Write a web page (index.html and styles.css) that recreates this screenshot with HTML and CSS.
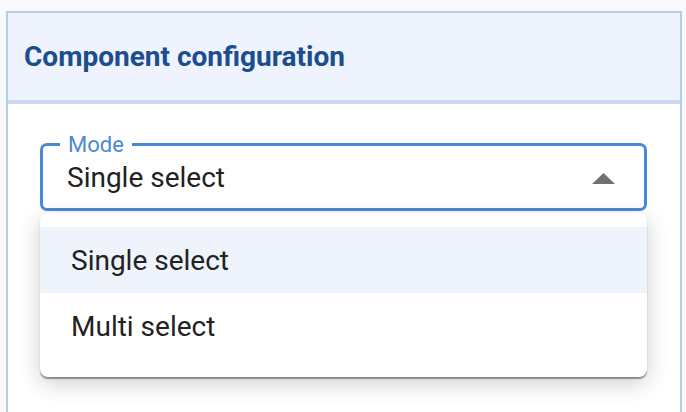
FILE: index.html
```html
<!DOCTYPE html>
<html lang="en">
<head>
<meta charset="utf-8">
<title>Component configuration</title>
<link rel="stylesheet" href="styles.css">
</head>
<body>
  <section class="card">
    <header class="card-header">
      <h2 class="card-title">Component configuration</h2>
    </header>
    <div class="card-body">
      <div class="select-wrap">
        <div class="select">
          <span class="select-label">Mode</span>
          <span class="select-value">Single select</span>
          <svg class="select-arrow" width="23" height="11" viewBox="0 0 23 11" aria-hidden="true">
            <path d="M0 11 L11.5 0 L23 11 Z" fill="#717171"/>
          </svg>
        </div>
        <ul class="menu">
          <li class="menu-item is-selected">Single select</li>
          <li class="menu-item">Multi select</li>
        </ul>
      </div>
    </div>
  </section>
</body>
</html>
```
FILE: styles.css
```css
html, body {
  margin: 0;
  padding: 0;
}
body {
  background: #f7f9fd;
  font-family: Roboto, "Liberation Sans", Arial, sans-serif;
  padding: 11px 4px 0 6px;
  height: 412px;
  box-sizing: border-box;
  overflow: hidden;
  display: flex;
  flex-direction: column;
}
.card {
  flex: 1;
  border: 2px solid #b8cce5;
  border-bottom: none;
  background: #ffffff;
}
.card-header {
  height: 87px;
  background: #eef3fd;
  border-bottom: 4px solid #cad9ee;
  display: flex;
  align-items: center;
  padding-left: 16px;
}
.card-title {
  margin: 0;
  font-size: 28px;
  font-weight: 700;
  color: #1c4d8f;
  line-height: 33px;
}
.card-body {
  padding: 39px 33px 0 32px;
}
.select-wrap {
  position: relative;
}
.select {
  position: relative;
  height: 68px;
  box-sizing: border-box;
  border: 3px solid #4a89d6;
  border-radius: 7px;
  display: flex;
  align-items: center;
  padding: 0 29px 0 24px;
  background: #fff;
}
.select-label {
  position: absolute;
  top: -12px;
  left: 17px;
  padding: 0 8px;
  background: #fff;
  color: #4a89d6;
  font-size: 22px;
  line-height: 22px;
}
.select-value {
  flex: 1;
  font-size: 28px;
  line-height: 33px;
  color: #222222;
  padding-top: 1px;
}
.select-arrow {
  display: block;
  margin-top: 2px;
}
.menu {
  position: absolute;
  top: 70px;
  left: 0;
  right: 0;
  margin: 0;
  list-style: none;
  padding: 14px 0 18px;
  background: #fff;
  border-radius: 8px;
  box-shadow: 0 2px 1px rgba(0, 0, 0, 0.38), 0 6px 22px rgba(0, 0, 0, 0.2);
}
.menu-item {
  height: 66px;
  display: flex;
  align-items: center;
  padding-left: 31px;
  font-size: 28px;
  color: #222222;
}
.menu-item.is-selected {
  background: #eff4fc;
}
```
